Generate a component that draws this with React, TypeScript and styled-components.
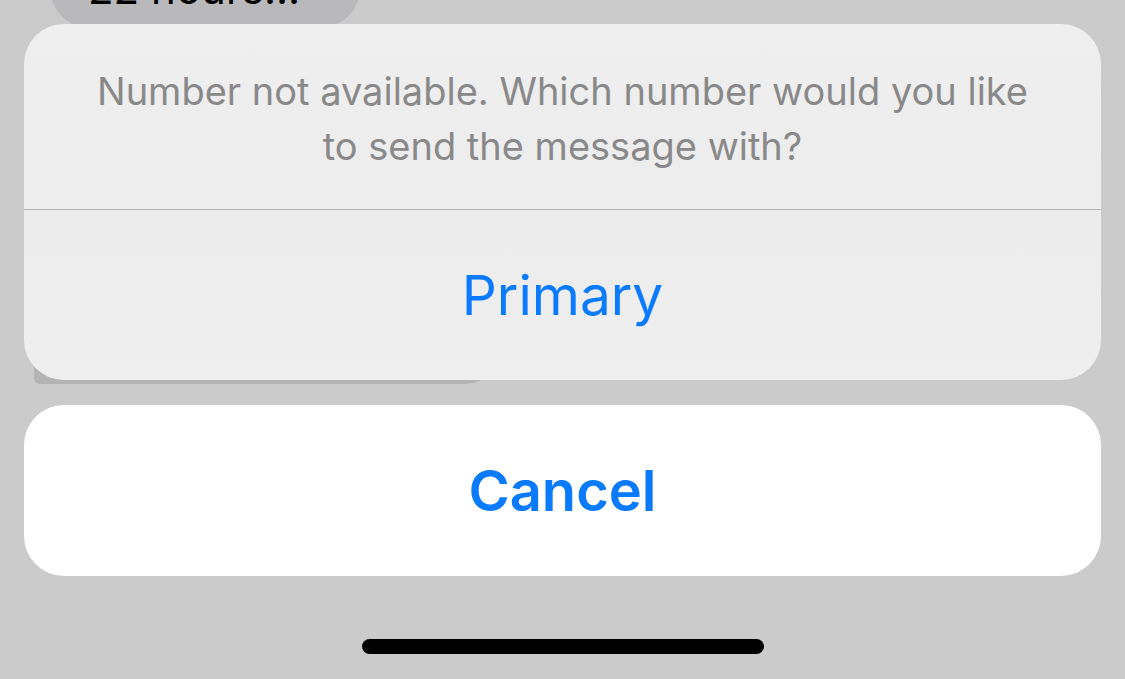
import React from 'react';
import styled, { createGlobalStyle } from 'styled-components';

const GlobalStyle = createGlobalStyle`
  html, body {
    margin: 0;
    padding: 0;
    background: #cbcbcb;
  }
  body {
    font-family: Inter, "Noto Sans", "Liberation Sans", sans-serif;
  }
`;

export default function App() {
  return (
    <Screen>
      <GlobalStyle />
      <TopBubble>22 hours...</TopBubble>
      <HiddenBubble />
      <Sheet>
        <Group>
          <Message>
            Number not available. Which number would you like
            <br />
            to send the message with?
          </Message>
          <Action>Primary</Action>
        </Group>
        <CancelButton>Cancel</CancelButton>
      </Sheet>
      <HomeBar />
    </Screen>
  );
}

const Screen = styled.div`
  position: relative;
  width: 1125px;
  height: 679px;
  overflow: hidden;
  background: #cbcbcb;
  display: flex;
  flex-direction: column;
  align-items: center;
`;

const TopBubble = styled.div`
  position: absolute;
  left: 50px;
  top: -60px;
  width: 310px;
  height: 88px;
  border-radius: 40px;
  background: #b9b9bb;
  box-sizing: border-box;
  padding: 28px 0 0 38px;
  font-size: 42px;
  line-height: 42px;
  color: #000;
`;

const HiddenBubble = styled.div`
  position: absolute;
  left: 34px;
  top: 220px;
  width: 470px;
  height: 164px;
  border-radius: 40px 40px 40px 6px;
  background: #b4b4b4;
`;

const Sheet = styled.div`
  position: relative;
  margin-top: 24px;
  width: 1077px;
  display: flex;
  flex-direction: column;
  gap: 25px;
`;

const Group = styled.div`
  border-radius: 40px;
  background: linear-gradient(180deg, #efefef 0%, #ececed 60%, #efefef 100%);
  overflow: hidden;
`;

const Message = styled.div`
  height: 186px;
  box-sizing: border-box;
  padding-top: 40px;
  text-align: center;
  font-size: 38px;
  line-height: 55px;
  color: #898989;
  border-bottom: 1px solid #b4b4b6;
`;

const Action = styled.div`
  height: 170px;
  display: flex;
  align-items: center;
  justify-content: center;
  font-size: 55px;
  color: #0a7aff;
`;

const CancelButton = styled.div`
  height: 171px;
  border-radius: 40px;
  background: #ffffff;
  display: flex;
  align-items: center;
  justify-content: center;
  font-size: 56px;
  font-weight: 600;
  color: #0a7aff;
`;

const HomeBar = styled.div`
  margin-top: 63px;
  width: 402px;
  height: 15px;
  border-radius: 8px;
  background: #000;
`;
